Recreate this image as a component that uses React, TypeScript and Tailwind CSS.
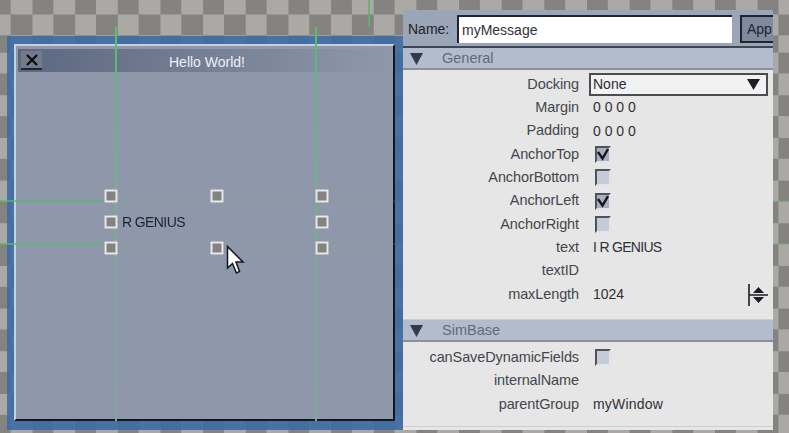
import React, { FC } from "react";

const handles = [
  [111, 196], [216.5, 196], [321.5, 196],
  [111, 222], [321.5, 222],
  [111, 248], [216.5, 248], [321.5, 248],
];

const Caret: FC = () => (
  <svg width="13" height="12" viewBox="0 0 13 12" className="shrink-0">
    <path d="M0 0 H13 L6.5 12 Z" fill="#2f3a4c" />
  </svg>
);

const SectionHeader: FC<{ title: string }> = ({ title }) => (
  <div className="flex h-[22px] items-center gap-[19px] border-b-2 border-[#8e9099] bg-[#b3bccd] pt-[2px] pl-[7px] text-[14.5px] text-[#5f6a7c]">
    <Caret />
    <span>{title}</span>
  </div>
);

const Row: FC<{ label: string; children?: React.ReactNode }> = ({ label, children }) => (
  <div className="flex h-[23.33px] items-center">
    <div className="w-[176px] text-right text-[14.5px] tracking-[-0.1px] text-[#44464c]">{label}</div>
    <div className="ml-[14px] flex flex-1 items-center text-[14px] text-[#2e3036]">{children}</div>
  </div>
);

const Check: FC<{ on?: boolean }> = ({ on }) => (
  <div
    className={
      on
        ? "ml-[2px] h-[17px] w-[16px] border-2 border-t-[#50525c] border-r-[#e2e4ea] border-b-[#e2e4ea] border-l-[#50525c] bg-[#a9aec0]"
        : "ml-[2px] h-[17px] w-[16px] border-2 border-t-[#50525c] border-r-[#e2e4ea] border-b-[#e2e4ea] border-l-[#50525c] bg-[#c6cbd8]"
    }
  >
    {on && (
      <svg width="12" height="13" viewBox="0 0 12 13">
        <path d="M1 4 L5.5 10.5 L11 1" fill="none" stroke="#15171d" strokeWidth="2.4" />
      </svg>
    )}
  </div>
);

const Spinner: FC = () => (
  <svg width="20" height="22" viewBox="0 0 20 22" className="mr-[5px] ml-auto">
    <path d="M1 0 V22 M1 11 H20" stroke="#1c1e24" strokeWidth="1.6" fill="none" />
    <path d="M5 9 L10.5 3 L16 9 Z M5 13 H16 L10.5 19 Z" fill="#1c1e24" />
  </svg>
);

const App: FC = () => {
  return (
    <div className="h-[433px] w-[789px] overflow-hidden bg-[#98968f] font-['Liberation_Sans',sans-serif]">
      <div className="relative flex h-full w-full bg-[conic-gradient(#85837f_25%,#aaa9a5_0_50%,#85837f_0_75%,#aaa9a5_0)] bg-[length:42.67px_42.67px] bg-[position:10.67px_-11.85px] blur-[0.4px]">
        {/* top strip of the canvas has its own checker phase */}
        <div className="absolute top-0 left-0 h-[36px] w-full bg-[conic-gradient(#85837f_25%,#aaa9a5_0_50%,#85837f_0_75%,#aaa9a5_0)] bg-[length:42.67px_42.67px] bg-[position:10.67px_-7.33px]" />

        {/* left: the edited window */}
        <div className="relative mt-[36px] ml-[7px] h-[394px] w-[396px] shrink-0 bg-[#3d6ba3]/90 pt-[8px] pl-[7px]">
          <div className="h-[377px] w-[381px] border-2 border-t-[#c7d0e2] border-r-[#15171f] border-b-[#15171f] border-l-[#c7d0e2] bg-[#8f98ab] pt-[3px] pl-[2px]">
            <div className="relative flex h-[23px] w-[374px] items-center bg-gradient-to-r from-[#5c6880] to-[#8f98ab]">
              <div className="ml-[3px] flex h-[19px] w-[21px] items-center justify-center border-b-2 border-[#20242e] bg-[#727a8c]">
                <svg width="14" height="12" viewBox="0 0 14 12">
                  <path d="M2 1 L12 11 M12 1 L2 11" stroke="#0c0e14" strokeWidth="2.4" />
                </svg>
              </div>
              <span className="absolute top-[3px] left-[151px] text-[14px] text-[#eef0f5]">Hello World!</span>
            </div>
          </div>
        </div>

        {/* right: inspector */}
        <div className="relative mt-[10px] h-[420px] w-[370px] shrink-0 bg-[#e6e6e6]">
          <div className="flex h-[36px] items-center bg-[#9aa5b8] pt-[2px] pl-[5px] text-[14px] text-[#1f2128]">
            <span className="w-[49px]">Name:</span>
            <div className="flex h-[28px] w-[275px] items-center border-t-2 border-l-2 border-[#20242e] bg-white pl-[3px] text-[#303238]">myMessage</div>
            <div className="ml-[8px] flex h-[28px] flex-1 items-center overflow-hidden border-2 border-r-0 border-[#20242e] bg-[#7f8aa0] pl-[5px] text-[#20242e]">
              App
            </div>
          </div>
          <div className="h-[2px] bg-[#3f4654]" />
          <SectionHeader title="General" />
          <div className="pt-[3px]">
            <Row label="Docking">
              <div className="-ml-[4px] flex h-[23px] w-[179px] items-center justify-between border-2 border-[#4a4c54] bg-[#f2f2f2] pr-[6px] pl-[2px] text-[#2a2c32]">
                <span>None</span>
                <svg width="13" height="11" viewBox="0 0 13 11"><path d="M0 0 H13 L6.5 11 Z" fill="#1c1e24" /></svg>
              </div>
            </Row>
            <Row label="Margin">0 0 0 0</Row>
            <Row label="Padding">0 0 0 0</Row>
            <Row label="AnchorTop"><Check on /></Row>
            <Row label="AnchorBottom"><Check /></Row>
            <Row label="AnchorLeft"><Check on /></Row>
            <Row label="AnchorRight"><Check /></Row>
            <Row label="text"><span className="tracking-[-0.7px]">I R GENIUS</span></Row>
            <Row label="textID" />
            <Row label="maxLength">1024<Spinner /></Row>
          </div>
          <div className="mt-[13px] h-px bg-[#cfcfcf]" />
          <SectionHeader title="SimBase" />
          <div className="pt-[4px]">
            <Row label="canSaveDynamicFields"><Check /></Row>
            <Row label="internalName" />
            <Row label="parentGroup"><span className="tracking-[0.2px]">myWindow</span></Row>
          </div>
          <div className="mt-[10px] h-px bg-[#cfcfcf]" />
        </div>

        {/* guides over the canvas */}
        <div className="absolute top-[27px] left-[115px] h-[394px] w-[2px] bg-gradient-to-b from-[#55bd70] to-[#87a3a3]" />
        <div className="absolute top-[27px] left-[315px] h-[394px] w-[2px] bg-gradient-to-b from-[#55bd70] to-[#87a3a3]" />
        <div className="absolute top-0 left-[368px] h-[27px] w-[2px] bg-[#58b86c]/80" />
        <div className="absolute top-[200px] left-0 h-[2px] w-[108px] bg-[#58b86c]/70" />
        <div className="absolute top-[243px] left-0 h-[2px] w-[108px] bg-[#58b86c]/70" />
        <div className="absolute top-[200px] left-[120px] h-[2px] w-[275px] bg-[#58b86c]/15" />
        <div className="absolute top-[243px] left-[120px] h-[2px] w-[275px] bg-[#58b86c]/15" />
        <div className="absolute top-[200px] left-[773px] h-[2px] w-[16px] bg-[#58b86c]/30" />
        <div className="absolute top-[243px] left-[773px] h-[2px] w-[16px] bg-[#58b86c]/30" />

        {/* selection handles */}
        {handles.map(([x, y]) => (
          <div
            key={`${x}-${y}`}
            className="absolute h-[13px] w-[13px] -translate-x-1/2 -translate-y-1/2 border-2 border-[#e8e9ee] bg-[#85837f]"
            style={{ left: x, top: y }}
          />
        ))}

        <span className="absolute top-[212px] left-[122px] text-[14px] tracking-[-0.6px] text-[#1d2230]">R GENIUS</span>

        <svg width="20" height="32" viewBox="0 0 20 32" className="absolute top-[245px] left-[226px]">
          <path d="M1.5 1.5 V23 L6.5 18.5 L10.5 28 L13.5 26.5 L10 17 H17 Z" fill="#fff" stroke="#14161c" strokeWidth="1.5" />
        </svg>
      </div>
    </div>
  );
};

export default App;
